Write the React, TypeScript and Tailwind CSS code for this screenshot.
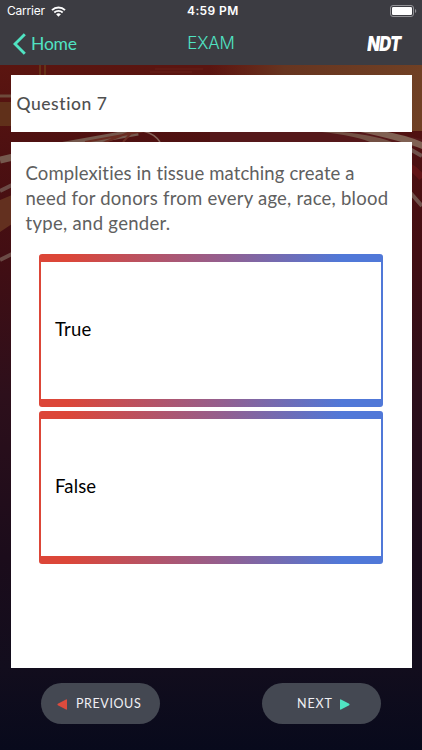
import { type FC } from 'react';

const StatusBar: FC = () => (
  <div className="relative flex h-[22px] items-center justify-between pr-[5px] pl-[7px] font-['Inter',sans-serif] text-[12px] text-white">
    <div className="flex items-center gap-[6px]">
      <span className="tracking-[-0.2px]">Carrier</span>
      <svg width="15" height="11" viewBox="0 0 15 11" fill="none">
        <path d="M1 4.1a9.4 9.4 0 0 1 13 0" stroke="white" strokeWidth="2" />
        <path d="M3.3 6.5a6.1 6.1 0 0 1 8.4 0" stroke="white" strokeWidth="1.8" />
        <path d="M7.5 10.8 5.1 8.3a3.5 3.5 0 0 1 4.8 0z" fill="white" />
      </svg>
    </div>
    <span className="absolute left-[187px] font-semibold tracking-[0.4px] whitespace-nowrap">
      4:59 PM
    </span>
    <svg width="27" height="12" viewBox="0 0 27 12" fill="none">
      <rect x="0.5" y="0.5" width="23" height="11" rx="2.5" stroke="#929296" />
      <rect x="2" y="2" width="20" height="8" rx="1.2" fill="white" />
      <path d="M25 4a2.2 2.2 0 0 1 0 4z" fill="#929296" />
    </svg>
  </div>
);

const NavBar: FC = () => (
  <div className="grid h-[43px] grid-cols-3 items-center">
    <button className="flex items-center gap-[5px] pl-[13px] text-[17.5px] tracking-[-0.2px] text-[#50e3c2]">
      <svg width="13" height="22" viewBox="0 0 13 22" fill="none">
        <path d="M11.8 1.2 2 11l9.8 9.8" stroke="currentColor" strokeWidth="2.9" />
      </svg>
      <span className="pt-px">Home</span>
    </button>
    <h1 className="pt-px text-center font-['Inter',sans-serif] text-[17px] font-light tracking-[-0.2px] text-[#50e3c2]">
      EXAM
    </h1>
    <span className="mr-[22px] origin-right scale-x-[0.82] justify-self-end font-['Inter',sans-serif] text-[20px] leading-none font-black tracking-[-0.8px] text-white italic">
      NDT
    </span>
  </div>
);

const Backdrop: FC = () => (
  <svg
    className="absolute inset-0"
    width="422"
    height="750"
    viewBox="0 0 422 750"
    fill="none"
  >
    <defs>
      <linearGradient id="night" x1="0" y1="65" x2="0" y2="750" gradientUnits="userSpaceOnUse">
        <stop offset="0" stopColor="#5b1510" />
        <stop offset="0.13" stopColor="#4d1011" />
        <stop offset="0.28" stopColor="#420e13" />
        <stop offset="0.48" stopColor="#2d0f1b" />
        <stop offset="0.72" stopColor="#1b0c1b" />
        <stop offset="0.88" stopColor="#120d1d" />
        <stop offset="1" stopColor="#080a1c" />
      </linearGradient>
      <linearGradient id="glow" x1="210" y1="0" x2="422" y2="0" gradientUnits="userSpaceOnUse">
        <stop offset="0" stopColor="#702f1c" stopOpacity="0" />
        <stop offset="0.35" stopColor="#673520" />
        <stop offset="1" stopColor="#704024" />
      </linearGradient>
    </defs>
    <rect width="422" height="750" fill="url(#night)" />
    <path d="M210 65h212v66H210z" fill="url(#glow)" />
    <path d="M210 131h172l40 8v8H210z" fill="#55181a" />
    <path d="M40 65v11M45 65v11" stroke="#71501f" />
    <path d="M155 69h48M150 72h42" stroke="#662018" />
    <path d="M0 102h11v24H0z" fill="#60301a" />
    <path d="M0 96h11" stroke="#6d4a3b" strokeWidth="3" />
    <path d="M0 200 12 195v29L0 232z" fill="#63301f" />
    <path d="M0 160 60 146 138 132" stroke="#75584d" strokeWidth="7" />
    <path d="M0 191 12 185M0 260l12-6" stroke="#6b4b46" strokeWidth="4" />
    <path d="M85 142 145 131M105 142l28-11M123 142l10-11" stroke="#6a2c22" strokeWidth="2" />
    <path d="M143 131q12 3 17 11" stroke="#866259" strokeWidth="1.5" />
    <path d="M310 131q40 3 60 11h22q-20-8-62-11" fill="#735044" />
    <path d="M382 131q24 4 40 11v7q-19-8-66-18z" fill="#806153" />
    <path d="M408 148l14 8M408 190l14 16" stroke="#70514b" strokeWidth="4" />
    <path d="M408 166q8 4 14 12" stroke="#611416" strokeWidth="7" />
  </svg>
);

const Answer: FC<{ label: string }> = ({ label }) => (
  <button className="block h-[153px] w-[344px] rounded-[3px] bg-[linear-gradient(90deg,#dc4638_8%,#965e8c_52%,#5078d8_88%)] px-[2px] py-[8px] text-left">
    <span className="flex h-full items-center bg-white pb-[2px] pl-[14px] text-[18.5px] tracking-[0.15px] text-black">
      {label}
    </span>
  </button>
);

export default function App() {
  return (
    <div className="relative h-[750px] w-[422px] overflow-hidden bg-[#080a1c] font-['Lato',sans-serif]">
      <Backdrop />
      <div className="relative flex h-full flex-col">
        <header className="h-[65px] shrink-0 bg-[#3c3c42]">
          <StatusBar />
          <NavBar />
        </header>

        <main className="flex flex-col gap-[10px] px-[10.5px] pt-[10px]">
          <section className="flex h-[57px] items-center bg-white pt-[2px] pl-[6px] text-[17.5px] font-medium tracking-[0.55px] text-[#505050]">
            Question 7
          </section>
          <section className="h-[526px] bg-white pt-[19px]">
            <p className="pl-[15px] text-[18.5px] leading-[25px] text-[#606060]">
              <span className="block tracking-[0.12px] whitespace-nowrap">
                Complexities in tissue matching create a
              </span>
              <span className="block tracking-[0.23px] whitespace-nowrap">
                need for donors from every age, race, blood
              </span>
              <span className="block tracking-[0.3px] whitespace-nowrap">
                type, and gender.
              </span>
            </p>
            <div className="mt-[18px] ml-[28.5px] flex flex-col gap-[4px]">
              <Answer label="True" />
              <Answer label="False" />
            </div>
          </section>
        </main>

        <footer className="mt-[15px] flex justify-between px-[41px] text-[12.5px] text-[#f0f0f4]">
          <button className="flex h-[41px] w-[119px] items-center rounded-full bg-[#444852] pt-px pl-[16px]">
            <svg className="mr-[9px]" width="10" height="11" viewBox="0 0 10 11">
              <path d="M.8 4.8 9 .4Q10 0 10 1v9q0 1-1 .6L.8 6.2Q0 5.5.8 4.8z" fill="#dc4b3d" />
            </svg>
            <span className="pt-px tracking-[0.6px]">PREVIOUS</span>
          </button>
          <button className="flex h-[41px] w-[119px] items-center rounded-full bg-[#444852] pt-px pl-[35px]">
            <span className="pt-px tracking-[0.9px]">NEXT</span>
            <svg className="ml-[7px]" width="10" height="11" viewBox="0 0 10 11">
              <path d="M9.2 4.8 1 .4Q0 0 0 1v9q0 1 1 .6l8.2-4.4q.8-.7 0-1.4z" fill="#50e3c2" />
            </svg>
          </button>
        </footer>
      </div>
    </div>
  );
}
